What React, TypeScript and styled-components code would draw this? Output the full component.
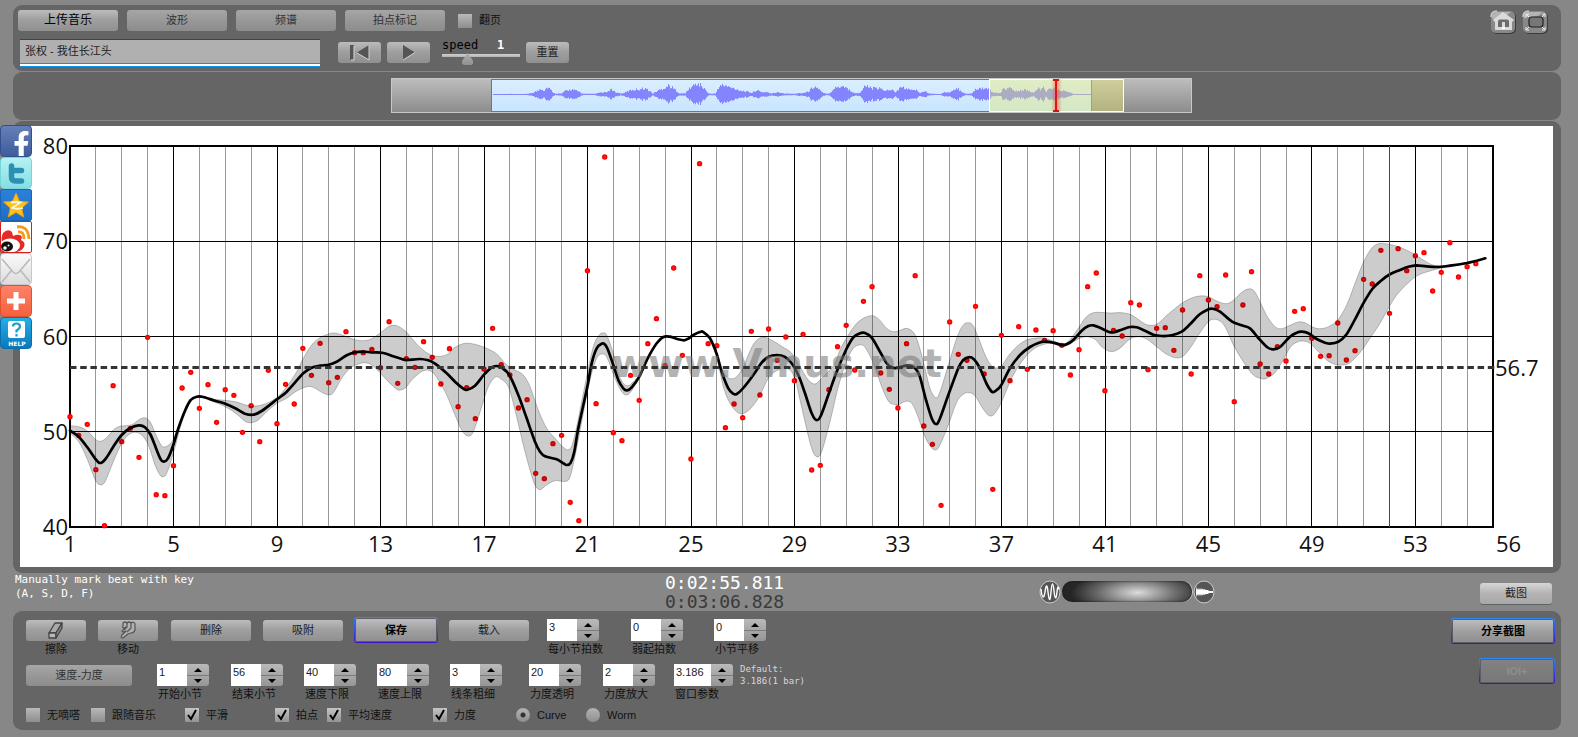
import React, { useId, useState } from "react";
import styled, { createGlobalStyle, css } from "styled-components";
import { FaFacebookF } from "react-icons/fa";

const sans = `"Liberation Sans", "Noto Sans CJK SC", sans-serif`;
const mono = `"DejaVu Sans Mono", "Liberation Mono", monospace`;

const GlobalStyle = createGlobalStyle`
  *, *::before, *::after { box-sizing: border-box; }
  body { margin: 0; background: #878787; font: 11px/13px ${sans}; color: #000; }
  button, input { font: inherit; margin: 0; }
`;

/* ---------- shared parts ---------- */

const Page = styled.div`
  position: relative;
  min-height: 100vh;
  padding: 5px 17px 7px 13px;
  display: flex;
  flex-direction: column;
`;

const Panel = styled.section`
  background: #656565;
  border-radius: 9px;
`;

const Button = styled.button<{ $w: number; $tone?: "bright" | "dim" | "light" }>`
  width: ${(p) => p.$w}px;
  height: 21px;
  padding: 0;
  flex: none;
  display: flex;
  align-items: center;
  justify-content: center;
  border: 0;
  border-radius: 3px;
  color: #1c1c1c;
  background: linear-gradient(#bcbcbc, #a0a0a0 45%, #909090);
  ${(p) =>
    p.$tone === "bright" &&
    css`
      color: #000;
      font-size: 12px;
    `}
  ${(p) =>
    p.$tone === "dim" &&
    css`
      color: #333;
      background: linear-gradient(#a6a6a6, #999 45%, #8c8c8c);
    `}
  ${(p) =>
    p.$tone === "light" &&
    css`
      margin-top: 3px;
      background: linear-gradient(#d6d6d6, #b4b4b4 50%, #a8a8a8);
      box-shadow: 0 1px 0 #5c6468;
    `}
`;

const OutlinedButton = styled.button<{ $w: number }>`
  width: ${(p) => p.$w}px;
  height: 26px;
  padding: 0;
  flex: none;
  border: 1px solid transparent;
  border-radius: 3px;
  font-weight: bold;
  color: #000;
  background: linear-gradient(#c0c0c0, #a0a0a0 50%, #8e8e8e) padding-box,
    linear-gradient(#2b8cff, #3c10c8) border-box;
  box-shadow: inset 0 0 0 1px #5c5c6c;
  &:disabled {
    color: #8e8e8e;
    background: linear-gradient(#828282, #787878) padding-box,
      linear-gradient(#2b8cff, #3c10c8) border-box;
  }
`;

const CheckLabel = styled.label`
  display: flex;
  align-items: center;
  gap: 7px;
  height: 16px;
  white-space: nowrap;
  color: #111;
`;

const Check = styled.input`
  appearance: none;
  width: 14px;
  height: 14px;
  flex: none;
  background: linear-gradient(#b8b8b8, #8e8e8e);
  &:checked {
    background: url("data:image/svg+xml,%3Csvg xmlns='http://www.w3.org/2000/svg' viewBox='0 0 14 14'%3E%3Cpath d='M3 7l3 4 5-9' fill='none' stroke='%23000' stroke-width='2'/%3E%3C/svg%3E"),
      linear-gradient(#c4c4c4, #949494);
  }
`;

const Radio = styled.input`
  appearance: none;
  width: 14px;
  height: 14px;
  flex: none;
  border-radius: 50%;
  background: linear-gradient(#b4b4b4, #8e8e8e);
  &:checked {
    background: radial-gradient(circle, #333 0 2px, transparent 3px), linear-gradient(#b4b4b4, #8e8e8e);
  }
`;

/* ---------- header ---------- */

const Header = styled(Panel)`
  height: 66px;
  padding: 5px 13px 0 5px;
  display: flex;
  justify-content: space-between;
`;

const HeaderLeft = styled.div`
  display: flex;
  flex-direction: column;
  gap: 8px;
`;

const TabRow = styled.div`
  display: flex;
  align-items: center;
  gap: 9px;
  ${CheckLabel} {
    margin-left: 4px;
  }
`;

const PlayerRow = styled.div`
  display: flex;
  align-items: flex-start;
  padding-left: 2px;
`;

const TitleInput = styled.input`
  width: 300px;
  height: 28px;
  padding: 0 5px 7px;
  margin-right: 18px;
  border: 0;
  border-top: 1px solid #444;
  border-bottom: 1px solid #0a90f0;
  color: #222;
  background: linear-gradient(#0a90f0 0 1px, #fff 1px) bottom / 100% 3px no-repeat, #b0b0b0;
  outline: 0;
`;

const Transport = styled.div`
  display: flex;
  gap: 6px;
  padding-top: 3px;
`;

const Speed = styled.div`
  width: 78px;
  margin: 0 6px 0 12px;
`;

const SpeedHead = styled.div`
  display: flex;
  height: 14px;
  font: 12px/12px ${mono};
  label {
    width: 55px;
  }
  output {
    color: #fff;
    font-weight: bold;
  }
`;

const SpeedRange = styled.input`
  appearance: none;
  display: block;
  width: 100%;
  height: 12px;
  background: linear-gradient(#d0d0d0, #b4b4b4) 0 1px / 100% 3px no-repeat;
  &::-webkit-slider-thumb {
    appearance: none;
    width: 11px;
    height: 12px;
    background: linear-gradient(#b0b0b0, #909090);
    clip-path: polygon(50% 0, 100% 65%, 100% 85%, 85% 100%, 15% 100%, 0 85%, 0 65%);
  }
`;

const WindowActions = styled.div`
  display: flex;
  gap: 6px;
`;

const IconButton = styled.button`
  width: 26px;
  height: 24px;
  padding: 0;
  border: 0;
  background: none;
  svg {
    display: block;
  }
`;

/* ---------- overview ---------- */

const OverviewPanel = styled(Panel)`
  height: 48px;
  margin: 1px 0;
  padding: 6px 0 0 9px;
  display: flex;
  justify-content: center;
`;

const Overview = styled.div`
  position: relative;
  display: grid;
  grid-template-columns: 99px 601px 1fr;
  width: 801px;
  height: 35px;
  border: 1px solid #c8c8c8;
  background: linear-gradient(#bdbdbd, #8c8c8c);
`;

const Track = styled.div`
  grid-column: 2;
  height: 33px;
  border: 1px solid #1090f0;
  background: linear-gradient(#daeeff, #c8e6ff);
  svg {
    display: block;
  }
`;

const VisibleRange = styled.div`
  position: absolute;
  left: 597px;
  top: 0;
  width: 135px;
  height: 33px;
  border: 1px solid #fff;
  background: rgba(232, 236, 110, 0.4);
`;

const PlayHead = styled.div`
  position: absolute;
  left: 659px;
  top: 0;
  width: 11px;
  height: 33px;
  background: linear-gradient(90deg, transparent 4px, #d81818 4px 6px, transparent 6px),
    linear-gradient(90deg, transparent, rgba(240, 80, 60, 0.45) 40% 60%, transparent);
  &::before,
  &::after {
    content: "";
    position: absolute;
    left: 2px;
    width: 6px;
    height: 2px;
    background: #d81010;
  }
  &::after {
    bottom: 0;
  }
`;

type Section = { at: number; pts: string };

const waveSections: Section[] = [
  {
    at: 0,
    pts: `335 1 390 2 400 1 440 2 455 6 470 12 478 20 488 12 498 24 510 12 520 3 540 3 550 10 570 16 590 10 605 2
      640 2 655 6 675 6 687 16 700 8 720 3 735 8 750 14 770 16 790 20 800 14 815 3 825 10 840 16 862 28 880 16 895 3
      912 4 925 20 945 34 960 28 975 10 985 2 1003 3 1010 22 1025 30 1045 22 1060 18 1080 12 1100 8 1112 5 1125 14
      1140 7 1155 8 1170 3 1190 7 1210 3 1240 2 1255 5`,
  },
  {
    at: 1260,
    pts: `0 4 20 8 38 26 52 18 62 6 75 2 85 3 95 18 122 28 140 18 155 5 175 4 185 22 195 26 210 20 235 18 255 12
      270 16 282 6 292 18 305 22 325 14 340 16 355 6 370 12 382 3 415 1 430 7 445 6 460 14 470 18 482 8 495 2 512 3
      522 18 540 20 560 16 567 14 575 6 598 4 605 18 625 20 640 10 670 14 700 6 710 22 718 14 725 22 733 8 740 16
      750 22 768 14 785 12 800 8 815 2 873 1`,
  },
];

/* ---------- chart data (sampled at a third of a pixel) ---------- */

const beatLevels = `890 946 913 1049 1217 797 965 925 1012 652 1124 1127 1037 804 757 865 794 907 809 826 937 857 965
  751 911 793 852 685 766 670 788 772 635 698 698 688 743 605 790 716 742 665 712 792 686 860 803 896 747 625 734 765
  864 839 1060 1076 971 946 1147 1202 452 851 111 938 962 766 841 671 596 736 444 706 1017 131 671 677 923 852 893 634
  825 627 721 651 782 643 1050 1036 809 680 616 750 544 500 759 808 864 671 467 918 973 1156 606 703 721 559 762 1108
  646 782 620 748 630 661 632 676 765 689 500 459 812 631 648 548 555 749 625 623 691 570 762 467 540 560 465 845 555
  455 732 762 680 723 574 566 655 709 707 609 720 692 478 492 391 580 386 452 407 398 513 457 368 471 440 431`
  .split(/\s+/)
  .map(Number);

const tempoCurve: Section[] = [
  {
    at: 0,
    pts: `210 932 236 950 262 982 285 1015 300 1029 318 1015 340 980 365 945 391 924 417 916 435 922 452 945 470 990
      482 1018 491 1025 504 1015 520 975 535 925 555 872 572 840 590 830 610 831 645 842 676 851 710 867 735 881
      760 884 785 873 831 838 857 818 883 790 910 760 935 743 960 737 986 734 1010 725 1040 706 1065 697 1089 695
      1115 697 1150 699 1180 709 1205 717 1220 720`,
  },
  {
    at: 1200,
    pts: `60 717 85 721 105 731 140 760 170 790 190 806 202 809 225 797 252 764 275 742 290 738 305 743 328 765
      355 825 380 895 405 965 420 995 435 1009 470 1018 490 1030 500 1035 512 1028 523 995 535 925 562 800 575 730
      590 685 605 671 612 671 622 685 640 735 655 780 670 805 682 811 695 802 718 770 743 715 770 670 790 651
      810 650 835 658 852 661 865 656 880 645 900 636 910 636 930 655 950 702 965 755 985 805 1000 821 1010 822
      1030 804 1060 765 1085 728 1105 711 1130 705 1155 711 1175 730 1195 765 1215 820 1235 880`,
  },
  {
    at: 2400,
    pts: `49 900 62 888 85 825 110 755 139 688 160 652 180 640 195 639 215 653 240 695 260 730 275 742 290 744
      320 736 340 740 358 765 378 840 395 895 407 912 418 900 445 825 475 745 490 720 505 712 520 716 540 745
      560 792 577 816 590 810 604 795 630 745 660 705 690 681 715 669 735 665 760 668 785 675 800 673 820 660
      845 632 865 618 880 616 900 623 925 635 940 637 965 629 990 621 1010 622 1035 632 1060 644 1085 648
      1115 646 1145 635 1170 613`,
  },
  {
    at: 3540,
    pts: `59 583 85 568 98 566 120 575 155 604 185 616 210 625 235 654 262 682 280 688 300 681 330 650 350 638
      366 635 385 640 410 657 435 668 450 671 475 665 498 645 525 598 550 550 577 507 603 482 630 463 660 450
      685 440 710 436 740 439 770 441 810 437 861 429 890 422 916 415`,
  },
];

const bandTop: Section[] = [
  {
    at: 0,
    pts: `210 917 240 921 265 935 285 957 300 964 318 955 340 930 360 919 395 914 420 897 437 894 452 908 470 950
      484 976 493 981 505 976 520 958 540 905 555 870 572 838 600 830 640 838 676 841 710 846 740 856 765 858
      795 852 831 832 860 800 890 755 910 715 935 675 960 653 985 642 1005 639 1035 648 1065 659 1090 662
      1115 656 1145 635 1165 620 1185 616`,
  },
  {
    at: 1200,
    pts: `0 622 20 637 50 672 80 698 110 709 140 704 165 682 195 670 225 673 260 685 290 702 320 735 345 750
      370 765 390 800 415 870 440 925 465 955 490 982 503 989 515 978 530 920 560 770 580 680 598 645 608 639
      620 645 640 700 655 760 670 790 682 797 695 790 718 765 743 715 770 670 790 651 810 650 835 658 852 661
      865 656 880 645 905 634 930 655 950 700 965 745 980 770 995 776 1010 770 1028 745 1045 705 1062 670
      1080 654 1095 652 1120 663 1150 682 1175 700 1200 740 1225 780`,
  },
  {
    at: 2400,
    pts: `45 792 62 778 85 755 105 730 120 690 139 655 165 616 190 595 215 587 235 596 260 625 280 635 300 631
      320 625 340 637 355 670 375 745 390 805 407 833 420 815 445 735 470 655 488 617 505 608 520 618 540 665
      560 715 580 742 604 738 625 708 650 680 675 662 700 655 730 654 750 660 785 671 805 664 835 625 855 595
      875 580 895 577 930 579 965 578 990 583 1010 595 1035 612 1055 616 1075 610 1105 582 1145 550 1175 534`,
  },
  {
    at: 3540,
    pts: `59 528 85 530 115 545 140 551 160 541 185 517 205 507 222 512 240 545 262 590 285 620 305 626 330 616
      355 606 375 608 400 622 420 626 445 620 473 600 500 555 525 490 551 425 575 385 595 371 615 371 645 377
      670 386 700 401 730 420 755 434 775 437 790 438 861 428`,
  },
];

const bandBottom: Section[] = [
  {
    at: 0,
    pts: `210 940 236 965 262 1018 285 1078 300 1094 315 1085 340 1025 365 970 385 945 405 937 425 945 445 975
      465 1035 480 1065 489 1070 500 1060 520 1000 540 925 560 868 575 838 600 831 640 845 676 860 710 882 735 904
      755 908 775 900 800 875 831 850 860 835 890 813 920 800 940 802 965 817 985 824 1000 818 1025 775 1050 745
      1075 732 1095 728 1115 735 1140 758 1165 785 1190 808 1202 810 1218 802 1240 775`,
  },
  {
    at: 1200,
    pts: `70 752 95 755 115 780 140 825 165 885 185 930 203 948 220 935 245 860 265 800 285 772 300 775 325 800
      345 870 370 975 390 1050 405 1095 420 1109 440 1095 465 1082 498 1084 512 1065 530 985 545 905 570 780
      590 715 608 702 622 715 645 775 665 815 680 825 695 812 718 772 743 715 770 670 790 651 810 650 835 658
      852 661 865 656 880 645 905 637 930 660 950 710 970 800 990 850 1010 875 1025 881 1045 872 1075 835
      1105 775 1130 752 1160 745 1183 770 1200 840 1215 905 1235 985`,
  },
  {
    at: 2400,
    pts: `50 1010 65 995 90 905 115 800 139 725 160 685 178 675 195 682 220 730 245 800 265 843 280 853 295 854
      318 844 335 850 352 885 375 950 392 980 407 990 420 975 445 915 470 847 490 823 507 818 525 827 545 860
      562 883 573 888 585 880 605 845 635 775 665 725 700 688 735 672 760 671 785 680 810 672 835 657 860 650
      885 658 905 680 925 693 945 693 965 680 990 657 1015 650 1040 657 1070 680 1100 703 1130 714 1150 708
      1170 685`,
  },
  {
    at: 3540,
    pts: `59 640 85 605 105 598 125 607 140 630 163 680 190 725 220 765 250 777 265 772 285 758 310 720 330 683
      350 667 370 663 390 670 415 695 440 720 465 733 490 735 510 728 540 698 570 655 600 610 628 560 650 525
      680 493 710 468 740 456 775 446 800 442 861 431`,
  },
];

type Point = [number, number];

const readSections = (sections: Section[]): Point[] =>
  sections.flatMap(({ at, pts }) => {
    const n = pts.trim().split(/\s+/).map(Number);
    const out: Point[] = [];
    for (let i = 0; i < n.length; i += 2) out.push([n[i] + at, n[i + 1]]);
    return out;
  });

const toChart = ([x, y]: Point): Point => [x / 3 - 20, y / 3 - 6];

/** Catmull-Rom spline through the points, as cubic segments. */
const spline = (p: Point[]) =>
  p
    .slice(0, -1)
    .map((b, i) => {
      const a = p[i - 1] ?? b;
      const c = p[i + 1];
      const d = p[i + 2] ?? c;
      const n = [b[0] + (c[0] - a[0]) / 6, b[1] + (c[1] - a[1]) / 6, c[0] - (d[0] - b[0]) / 6, c[1] - (d[1] - b[1]) / 6, c[0], c[1]];
      return "C" + n.map((v) => v.toFixed(1)).join(" ");
    })
    .join("");

const curvePoints = readSections(tempoCurve).map(toChart);
const topPoints = readSections(bandTop).map(toChart);
const bottomPoints = readSections(bandBottom).map(toChart).reverse();
const curvePath = `M${curvePoints[0]}${spline(curvePoints)}`;
const bandPath = `M${topPoints[0]}${spline(topPoints)}L${bottomPoints[0]}${spline(bottomPoints)}Z`;

const plot = { left: 50, right: 1473, top: 20, bottom: 401 };
const barX = (bar: number) => plot.left + ((bar - 1) * (plot.right - plot.left)) / 55;
const tempoY = (t: number) => plot.bottom - ((t - 40) * (plot.bottom - plot.top)) / 40;

const wavePath = (() => {
  const env = readSections(waveSections).map(([x, a]): Point => [(x - 333) / 3, a / 3]);
  const up: string[] = [];
  const down: string[] = [];
  let k = 0;
  for (let x = 1; x < 599; x++) {
    while (k < env.length - 2 && env[k + 1][0] < x) k++;
    const [x0, a0] = env[k];
    const [x1, a1] = env[k + 1];
    const f = Math.min(1, Math.max(0, (x - x0) / (x1 - x0)));
    const level = a0 + (a1 - a0) * f;
    const noise = Math.abs((Math.sin(x * 12.9898) * 43758.5453) % 1);
    const ripple = level < 1 ? 1 : 0.7 + 0.5 * noise;
    const h = Math.max(0.5, level * ripple);
    up.push(`${x} ${(14.5 - h).toFixed(1)}H${x + 1}`);
    down.unshift(`${x + 1} ${(14.5 + h * 0.9).toFixed(1)}H${x}`);
  }
  return `M${up.join("L")}L${down.join("L")}Z`;
})();

const ChartPanel = styled(Panel)`
  padding: 5px 8px 6px 7px;
`;

const ChartSvg = styled.svg`
  display: block;
  width: 100%;
  background: #fff;
  text {
    font: 22px "Open Sans", "Noto Sans", sans-serif;
    fill: #111;
  }
  .mark {
    font: bold 39px "DejaVu Sans", sans-serif;
    fill: rgba(120, 120, 120, 0.56);
  }
`;

function TempoChart() {
  const bars = Array.from({ length: 54 }, (_, i) => i + 2);
  return (
    <ChartSvg viewBox="0 0 1533 441" role="img" aria-label="Tempo curve">
      {bars.map((b) => {
        const major = b % 4 === 1;
        const x = Math.floor(barX(b) + 0.1) + 0.5;
        return <path key={b} d={`M${x} ${plot.top}V${plot.bottom}`} stroke={major ? "#000" : "#999"} />;
      })}
      {[50, 60, 70].map((t) => {
        const y = Math.floor(tempoY(t)) + 0.5;
        return <path key={t} d={`M${plot.left} ${y}H${plot.right}`} stroke="#000" />;
      })}
      <rect x={plot.left} y={plot.top} width={plot.right - plot.left} height={plot.bottom - plot.top} fill="none" stroke="#000" strokeWidth="2" />
      {beatLevels.map((v, i) => (
        <circle key={i} cx={barX(1 + i / 3)} cy={v / 3 - 6} r="1.7" fill="#f44" stroke="#f00" strokeWidth="2" />
      ))}
      <path d={bandPath} fill="rgba(0,0,0,.2)" stroke="rgba(0,0,0,.22)" strokeWidth="1" />
      <path d={curvePath} fill="none" stroke="#000" strokeWidth="2.7" strokeLinecap="round" />
      <text className="mark" x="592" y="251">www.Vmus.net</text>
      <path d={`M${plot.left} 241.5H1476`} stroke="#333" strokeWidth="3" strokeDasharray="6.5 3.7" />
      <path d={`M1369.5 ${plot.top}V${plot.bottom}`} stroke="#f00000" />
      {[40, 50, 60, 70, 80].map((t) => (
        <text key={t} x="48" y={tempoY(t) + 8} textAnchor="end">{t}</text>
      ))}
      {Array.from({ length: 14 }, (_, i) => 1 + i * 4).map((b) => (
        <text key={b} x={barX(b)} y="426" textAnchor="middle">{b}</text>
      ))}
      <text x="1476" y="426">56</text>
      <text x="1475" y="250">56.7</text>
    </ChartSvg>
  );
}

/* ---------- share strip ---------- */

const ShareStrip = styled.nav`
  position: absolute;
  left: 0;
  top: 125px;
  width: 32px;
`;

const ShareLink = styled.a<{ $bg: string; $edge: string; $square?: boolean }>`
  display: flex;
  align-items: center;
  justify-content: center;
  height: 32px;
  overflow: hidden;
  border: 1px solid ${(p) => p.$edge};
  border-radius: ${(p) => (p.$square ? 2 : 4)}px;
  background: ${(p) => p.$bg};
  svg {
    flex: none;
  }
`;

const Facebook = styled(FaFacebookF)`
  width: 17px;
  height: 26px;
  color: #fff;
  margin: 6px 0 0 10px;
`;

function Share() {
  return (
    <ShareStrip aria-label="Share">
      <ShareLink href="#facebook" aria-label="Facebook" $edge="#33508c" $bg="linear-gradient(#6580b8, #3f5c9c)">
        <Facebook />
      </ShareLink>
      <ShareLink href="#twitter" aria-label="Twitter" $edge="#7ad4dc" $bg="linear-gradient(#b4f2f2, #84dfe2)">
        <svg width="30" height="30" viewBox="0 0 30 30">
          <path d="M10.500 8v11q0 4 4 4h6M10.500 12.500h10" fill="none" stroke="#2c8fb4" strokeWidth="5.500" strokeLinecap="round" />
        </svg>
      </ShareLink>
      <ShareLink href="#qzone" aria-label="Qzone" $square $edge="#1c66b8" $bg="linear-gradient(#2c80d8, #1f6ec4)">
        <svg width="30" height="30" viewBox="0 0 30 30">
          <path d="M15 3l3.500 8.300 9 .8-6.800 6 2 9L15 22.400 7.300 27l2-9L2.500 12l9-.8z" fill="#fcc21e" stroke="#e39c12" />
          <path d="M10 12.500q5-1 9.500 0L11 18q5 1.500 11 0" fill="none" stroke="#fff6d8" strokeWidth="1.800" />
        </svg>
      </ShareLink>
      <ShareLink href="#weibo" aria-label="Weibo" $square $edge="#d02020" $bg="#fff">
        <svg width="30" height="30" viewBox="0 0 30 30">
          <path d="M1 21Q0 15 2 11q5-5 9-1l1 4q7-3 9 1l-1 3q5 2 3 7-3 5-9 5H0z" fill="#e62828" />
          <ellipse cx="9" cy="23.500" rx="10" ry="7" fill="#fff" />
          <ellipse cx="6" cy="24.500" rx="6" ry="5" fill="#111" />
          <circle cx="4" cy="26" r="1.800" fill="#fff" />
          <circle cx="7.500" cy="23.500" r="1" fill="#fff" />
          <path d="M16 5q11-2 12 12M17 10q6-1 6 7" fill="none" stroke="#f7991c" strokeWidth="2.800" />
        </svg>
      </ShareLink>
      <ShareLink href="#mail" aria-label="Mail" $edge="#c8c8c8" $bg="linear-gradient(#fafafa, #dcdcdc)">
        <svg width="30" height="30" viewBox="0 0 30 30" fill="none" stroke="#b8b8b8" strokeWidth="1.500">
          <path d="M1 5l11 13q3 3 6 0L29 5M1 28l9-11M29 28l-9-11" />
        </svg>
      </ShareLink>
      <ShareLink href="#more" aria-label="More" $edge="#e2512c" $bg="linear-gradient(#ff8268, #f5603f)">
        <svg width="30" height="30" viewBox="0 0 30 30">
          <path d="M15 6v18M6 15h18" stroke="#fff" strokeWidth="5" />
        </svg>
      </ShareLink>
      <ShareLink href="#help" aria-label="Help" $edge="#0a6eb0" $bg="linear-gradient(#22b0e4, #0b78bc)">
        <svg width="30" height="30" viewBox="0 0 30 30">
          <rect x="7" y="3" width="17" height="17" rx="2" fill="#fff" />
          <path d="M12 8.500q0-3 3.500-3t3.500 3q0 2-3.500 4v2M15.500 16v2.500" fill="none" stroke="#18a0c8" strokeWidth="2.200" />
          <text x="16" y="28" textAnchor="middle" fontSize="6" fontWeight="bold" fill="#fff" fontFamily="DejaVu Sans">HELP</text>
        </svg>
      </ShareLink>
    </ShareStrip>
  );
}

/* ---------- status strip ---------- */

const StatusBar = styled.div`
  display: grid;
  grid-template-columns: 650fr 374fr 441fr 73px;
  align-items: center;
  height: 38px;
  padding: 0 8px 0 2px;
`;

const Hint = styled.p`
  align-self: start;
  margin: 0;
  color: #fff;
  font: 11px/14px ${mono};
`;

const Clock = styled.div<{ $total?: boolean }>`
  font: 18px/19px ${mono};
  color: ${(p) => (p.$total ? "#3a3a3a" : "#fff")};
`;

const Zoom = styled.div`
  display: flex;
  align-items: center;
  gap: 1px;
  padding-bottom: 1px;
`;

const ZoomRange = styled.input`
  appearance: none;
  width: 130px;
  height: 21px;
  border-radius: 11px;
  background: radial-gradient(ellipse 66px 22px at 58% 55%, #dcdcdc, #6a6a6a 60%, #262626);
  box-shadow: inset 0 0 2px #111, 1px 0 0 #ccc;
  &::-webkit-slider-thumb {
    appearance: none;
    width: 20px;
    height: 20px;
    background: none;
  }
`;

/* ---------- editor panel ---------- */

const Editor = styled(Panel)`
  display: flex;
  justify-content: space-between;
  padding: 6px 6px 7px 13px;
`;

const Rows = styled.div`
  display: flex;
  flex-direction: column;
  gap: 6px;
`;

const Row = styled.div<{ $cols: string }>`
  display: grid;
  grid-template-columns: ${(p) => p.$cols};
`;

const Cell = styled.div`
  display: flex;
  flex-direction: column;
  color: #111;
`;

const Control = styled.div`
  display: flex;
  align-items: center;
  height: 26px;
`;

const Caption = styled.label`
  height: 13px;
  padding-left: 1px;
  white-space: nowrap;
`;

const ToolCaption = styled(Caption)`
  width: 60px;
  padding: 0;
  text-align: center;
`;

const NumberInput = styled.input<{ $wide?: boolean }>`
  width: ${(p) => (p.$wide ? 37 : 30)}px;
  height: 22px;
  padding: 0 0 7px 2px;
  border: 0;
  background: #fff;
  color: #222;
`;

const Steps = styled.div`
  display: flex;
  flex-direction: column;
  width: 22px;
  height: 22px;
  overflow: hidden;
  border-radius: 0 3px 3px 0;
`;

const Step = styled.button`
  display: flex;
  align-items: center;
  justify-content: center;
  height: 11px;
  padding: 0;
  border: 0;
  background: linear-gradient(#bababa, #a6a6a6);
  & + & {
    border-top: 1px solid #7c7c7c;
    background: linear-gradient(#a6a6a6, #969696);
  }
`;

const DefaultNote = styled.p`
  margin: 0;
  align-self: start;
  padding-top: 1px;
  white-space: nowrap;
  color: #d8d8d8;
  font: 9px/12px ${mono};
`;

const ShareActions = styled.div`
  display: flex;
  flex-direction: column;
  align-items: flex-end;
  gap: 14px;
  padding-top: 1px;
`;

function Spinner({ label, value, wide }: { label: string; value: string; wide?: boolean }) {
  const id = useId();
  const [text, setText] = useState(value);
  const step = (d: number) => setText((t) => String(Number(t) + d));
  return (
    <Cell>
      <Control>
        <NumberInput id={id} $wide={wide} value={text} onChange={(e) => setText(e.target.value)} />
        <Steps>
          <Step type="button" aria-label={`${label} +`} onClick={() => step(1)}>
            <svg width="8" height="4"><path d="M0 4l4-4 4 4z" /></svg>
          </Step>
          <Step type="button" aria-label={`${label} -`} onClick={() => step(-1)}>
            <svg width="8" height="4"><path d="M0 0l4 4 4-4z" /></svg>
          </Step>
        </Steps>
      </Control>
      <Caption htmlFor={id}>{label}</Caption>
    </Cell>
  );
}

function Toggle({ label, on }: { label: string; on?: boolean }) {
  return (
    <CheckLabel>
      <Check type="checkbox" defaultChecked={on} />
      {label}
    </CheckLabel>
  );
}

export default function App() {
  return (
    <>
      <GlobalStyle />
      <Page>
        <Header as="header">
          <HeaderLeft>
            <TabRow>
              <Button $w={100} $tone="bright">上传音乐</Button>
              <Button $w={100} $tone="dim">波形</Button>
              <Button $w={100} $tone="dim">频谱</Button>
              <Button $w={100} $tone="dim">拍点标记</Button>
              <Toggle label="翻页" />
            </TabRow>
            <PlayerRow>
              <TitleInput aria-label="曲目" defaultValue="张权 - 我住长江头" />
              <Transport>
                <Button $w={43} aria-label="Back to start">
                  <svg width="22" height="17" viewBox="0 0 22 17">
                    <path d="M1 1h4v15H1z" fill="#555" />
                    <path d="M2 16h3V2" fill="none" stroke="#d8d8d8" />
                    <path d="M20 1L8 8.500 20 16z" fill="#555" />
                    <path d="M8 9l12 7V1" fill="none" stroke="#d0d0d0" />
                  </svg>
                </Button>
                <Button $w={43} aria-label="Play">
                  <svg width="14" height="17" viewBox="0 0 14 17">
                    <path d="M1 1l12 7.500L1 16z" fill="#555" />
                    <path d="M1 16l12-7.500" stroke="#d0d0d0" />
                  </svg>
                </Button>
              </Transport>
              <Speed>
                <SpeedHead>
                  <label htmlFor="speed">speed</label>
                  <output htmlFor="speed">1</output>
                </SpeedHead>
                <SpeedRange id="speed" type="range" min={0} max={3} step={0.1} defaultValue={0.9} />
              </Speed>
              <Transport>
                <Button $w={43}>重置</Button>
              </Transport>
            </PlayerRow>
          </HeaderLeft>
          <WindowActions>
            <IconButton aria-label="Home">
              <svg width="26" height="24" viewBox="0 0 26 24">
                <rect x="2" y="2" width="24" height="22" rx="5" fill="#3c3c3c" />
                <rect x="1" y="1" width="24" height="22" rx="5" fill="#888" />
                <path d="M2 7q0-5 5-5h14L6 13 2 8z" fill="#b4b4b4" />
                <path d="M1 7q0-6 6-6" fill="none" stroke="#ccc" strokeWidth="1.500" />
                <path d="M13 2L3 10l2 2v8h17v-8l2-2-4-3z" fill="#dadada" />
                <path d="M8 11.500q0-2 2-2h7q2 0 2 2V17h-4v-5h-3v5H8z" fill="#6c6c6c" />
                <path d="M12 17h3v2h-3z" fill="#fff" />
              </svg>
            </IconButton>
            <IconButton aria-label="Full screen">
              <svg width="26" height="24" viewBox="0 0 26 24">
                <rect x="2" y="2" width="24" height="22" rx="5" fill="#3c3c3c" />
                <rect x="1" y="1" width="24" height="22" rx="5" fill="#888" />
                <path d="M2 9V6q0-4 5-4h13q-2 5-12 5-4 0-6 2z" fill="#b4b4b4" />
                <path d="M1 7q0-6 6-6" fill="none" stroke="#ccc" strokeWidth="1.500" />
                <rect x="7" y="7" width="14" height="10" rx="3" fill="#777" stroke="#222" strokeWidth="1.200" />
                <path d="M7 7L4 4m0 3V4h3M20 7l3-3m-3 0h3v3M7 17l-3 3m0-3v3h3M20 17l3 3m-3 0h3v-3" fill="none" stroke="#eee" />
              </svg>
            </IconButton>
          </WindowActions>
        </Header>

        <OverviewPanel>
          <Overview>
            <Track>
              <svg width="599" height="31" viewBox="0 0 599 31">
                <path d={wavePath} fill="#8484ff" />
              </svg>
            </Track>
            <VisibleRange />
            <PlayHead />
          </Overview>
        </OverviewPanel>

        <ChartPanel as="main">
          <TempoChart />
        </ChartPanel>

        <StatusBar>
          <Hint>
            Manually mark beat with key
            <br />
            (A, S, D, F)
          </Hint>
          <div>
            <Clock>0:02:55.811</Clock>
            <Clock $total>0:03:06.828</Clock>
          </div>
          <Zoom>
            <svg width="22" height="24" viewBox="0 0 22 24" fill="none">
              <ellipse cx="11" cy="12" rx="10" ry="11" fill="#555" stroke="#ccc" />
              <path
                d="M2 9C3 19 5 19 6 12S8 3 9 12s2 11 3 0 2-10 3-1 2 9 3 1 1-4 2-3"
                stroke="#fff"
                strokeWidth="1.400"
              />
            </svg>
            <ZoomRange type="range" aria-label="Zoom" defaultValue={58} />
            <svg width="22" height="24" viewBox="0 0 22 24">
              <ellipse cx="11" cy="12" rx="10" ry="11" fill="#555" stroke="#ccc" />
              <path d="M3 6l1 4 1-2 1 2 1-2 1 2 1-2 1 2 1-1 2 1 2 0 1 1h4v2h-4l-1 1-2 0-2 1-1-1-1 2-1-2-1 2-1-2-1 2-1-2-1 4z" fill="#fff" />
            </svg>
          </Zoom>
          <Button $w={72} $tone="light">截图</Button>
        </StatusBar>

        <Editor>
          <Rows>
            <Row $cols="72px 73px 92px 91px 95px 98px 84px 83px auto">
              <Cell>
                <Control>
                  <Button $w={60} aria-labelledby="erase">
                    <svg width="18" height="17" viewBox="0 0 18 17" stroke="#444" strokeWidth="1.300" strokeLinejoin="round">
                      <path d="M8 1h7L9 11H2z" fill="#aaa" />
                      <path d="M2 11h7v5H2z" fill="#b8b8b8" />
                      <path d="M15 1v5L9 16v-5z" fill="#888" />
                    </svg>
                  </Button>
                </Control>
                <ToolCaption as="span" id="erase">擦除</ToolCaption>
              </Cell>
              <Cell>
                <Control>
                  <Button $w={60} aria-labelledby="move">
                    <svg width="18" height="18" viewBox="0 0 18 18" fill="#b0b0b0" stroke="#555" strokeWidth="1.200" strokeLinejoin="round">
                      <path d="M4 2q2-2 4 0 2-2 4 0 3-2 4 1v6q-1 3-4 3l-3 1-5 4q-3 0-1-3l4-4-3 1q-2-1 0-2l3-3-2 1q-2 0-1-2z" />
                      <path d="M8 2v4L5 9M12 2v5l-4 4" fill="none" />
                    </svg>
                  </Button>
                </Control>
                <ToolCaption as="span" id="move">移动</ToolCaption>
              </Cell>
              <Control><Button $w={80}>删除</Button></Control>
              <Control><Button $w={80}>吸附</Button></Control>
              <Control><OutlinedButton $w={84}>保存</OutlinedButton></Control>
              <Control><Button $w={80}>载入</Button></Control>
              <Spinner label="每小节拍数" value="3" />
              <Spinner label="弱起拍数" value="0" />
              <Spinner label="小节平移" value="0" />
            </Row>
            <Row $cols="131px 74px 73px 73px 73px 79px 74px 71px 66px auto">
              <Control><Button $w={106} $tone="dim">速度-力度</Button></Control>
              <Spinner label="开始小节" value="1" />
              <Spinner label="结束小节" value="56" />
              <Spinner label="速度下限" value="40" />
              <Spinner label="速度上限" value="80" />
              <Spinner label="线条粗细" value="3" />
              <Spinner label="力度透明" value="20" />
              <Spinner label="力度放大" value="2" />
              <Spinner label="窗口参数" value="3.186" wide />
              <DefaultNote>
                Default:
                <br />
                3.186(1 bar)
              </DefaultNote>
            </Row>
            <Row $cols="65px 94px 90px 52px 106px 83px 70px auto">
              <Toggle label="无嘀嗒" />
              <Toggle label="跟随音乐" />
              <Toggle label="平滑" on />
              <Toggle label="拍点" on />
              <Toggle label="平均速度" on />
              <Toggle label="力度" on />
              <CheckLabel><Radio type="radio" name="shape" defaultChecked />Curve</CheckLabel>
              <CheckLabel><Radio type="radio" name="shape" />Worm</CheckLabel>
            </Row>
          </Rows>
          <ShareActions>
            <OutlinedButton $w={104}>分享截图</OutlinedButton>
            <OutlinedButton $w={76} disabled>IOI+</OutlinedButton>
          </ShareActions>
        </Editor>
        <Share />
      </Page>
    </>
  );
}
